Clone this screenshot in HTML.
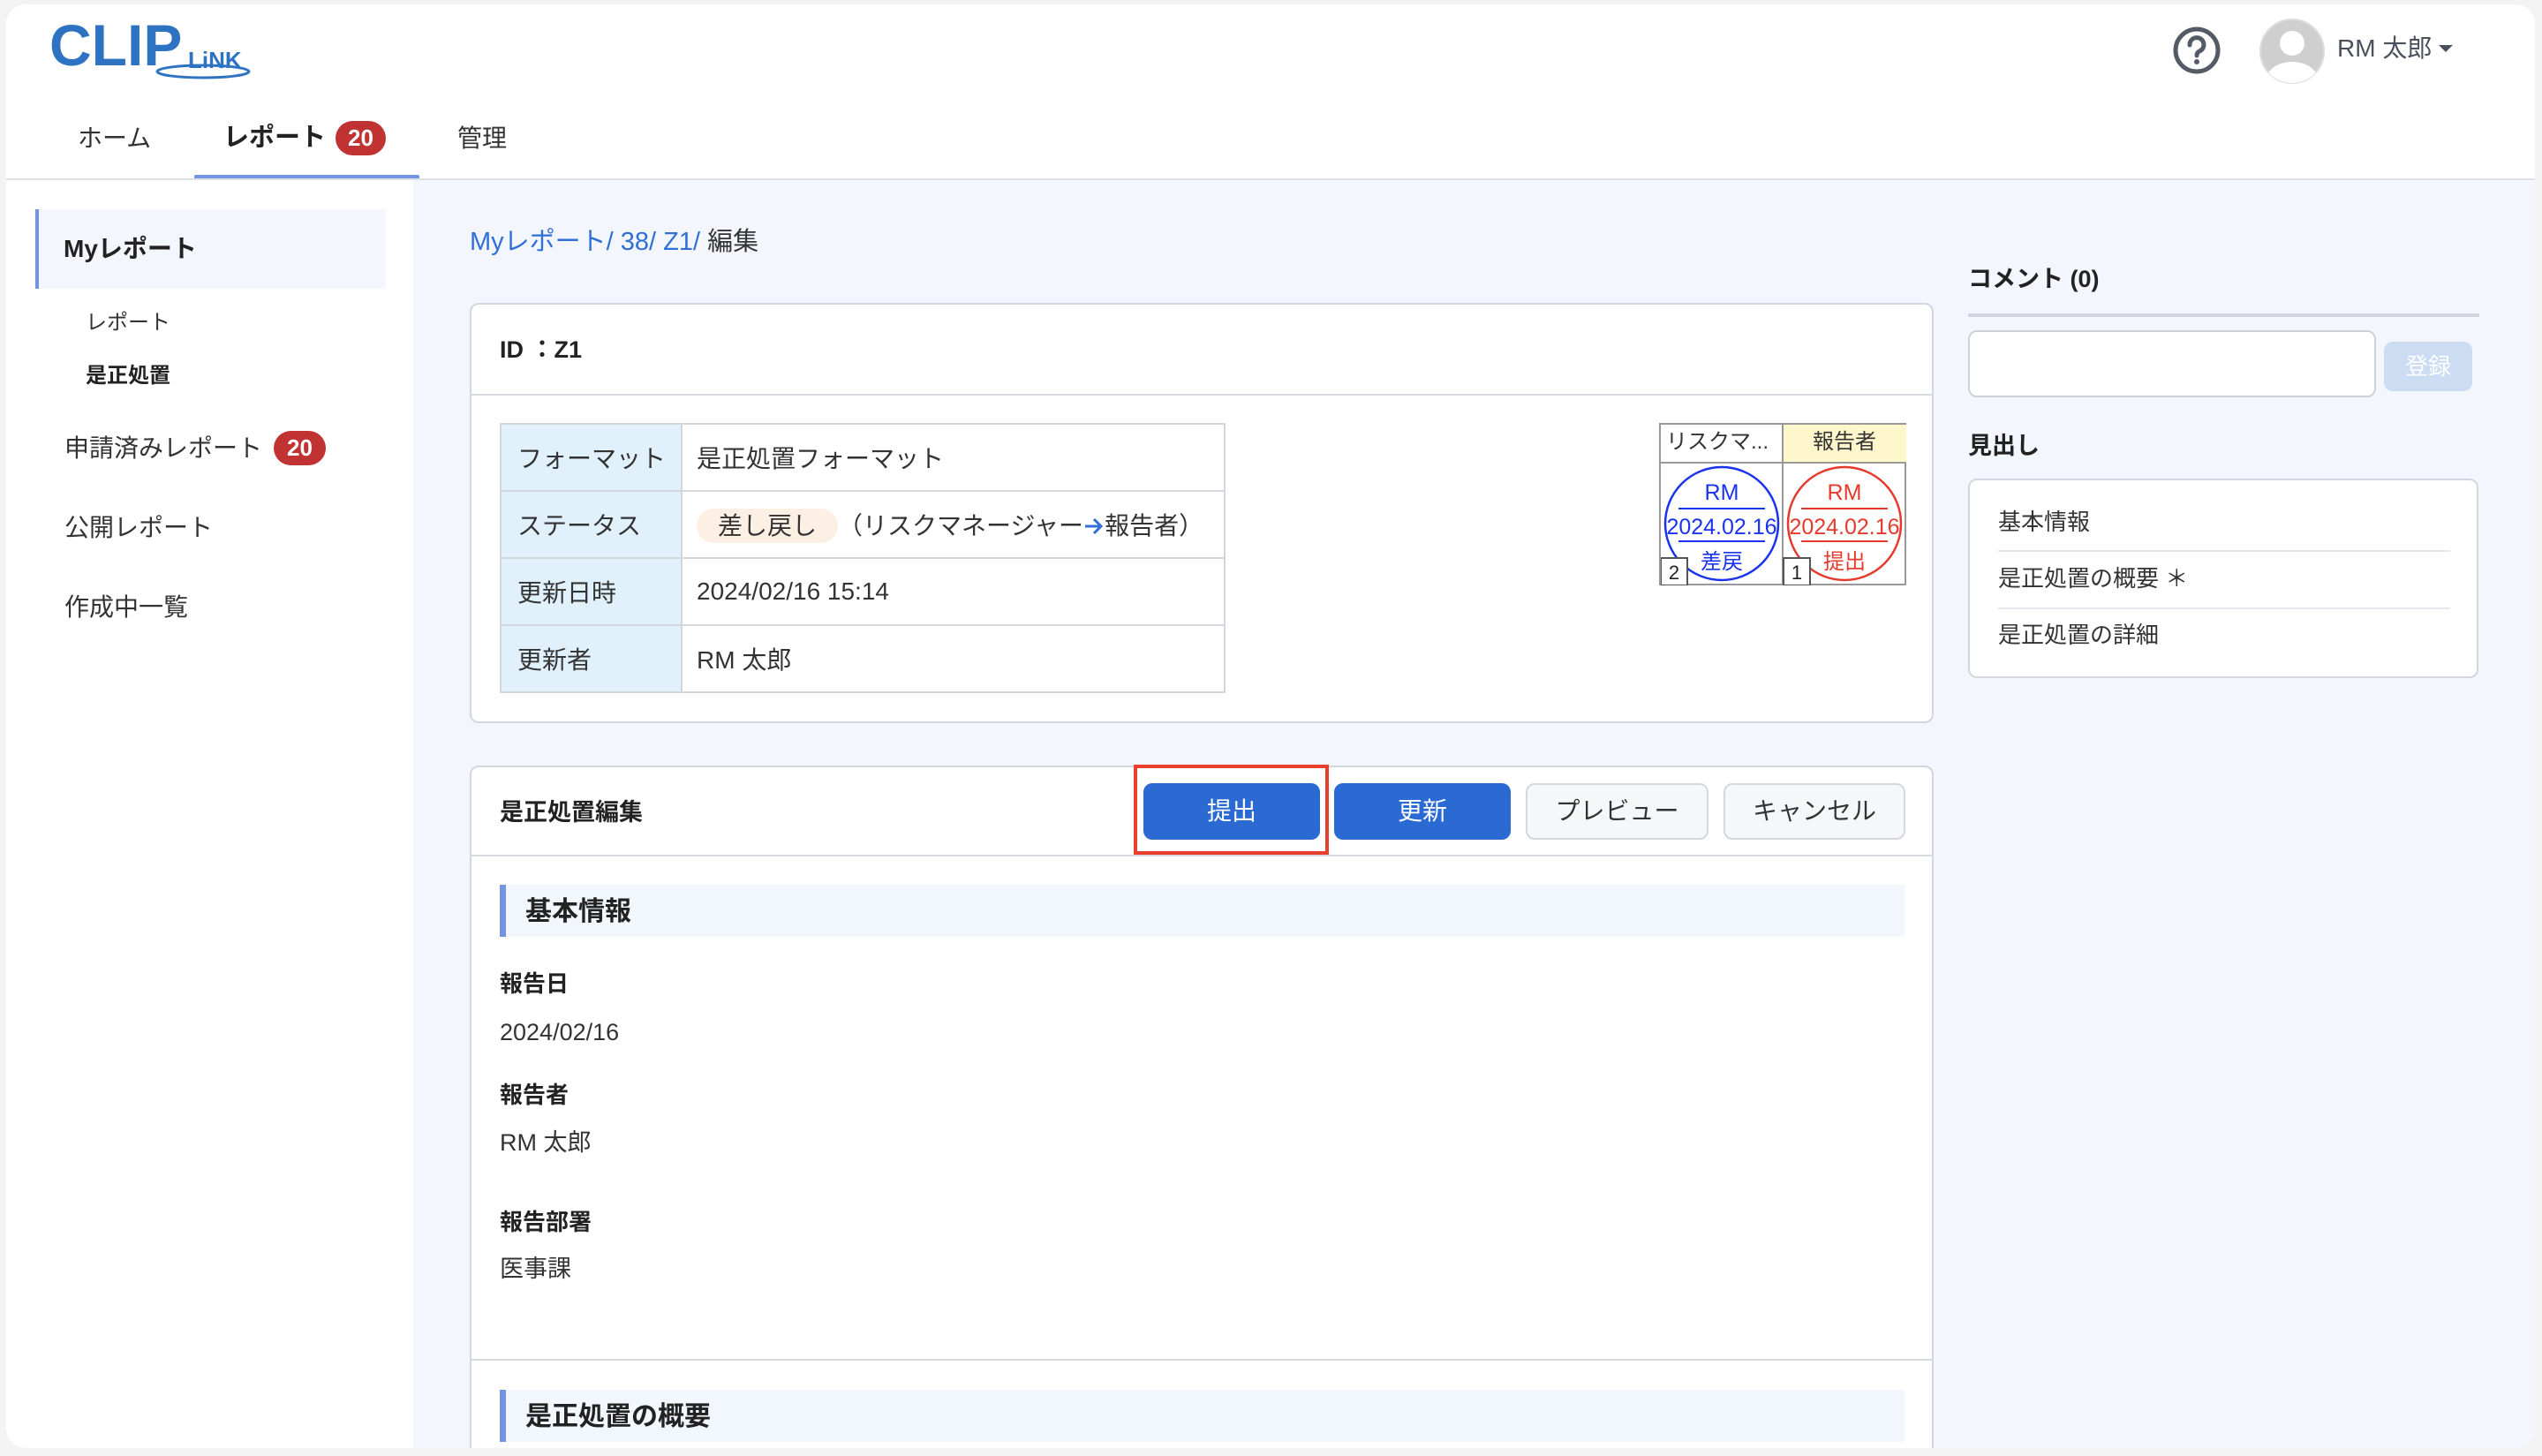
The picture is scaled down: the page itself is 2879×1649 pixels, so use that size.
<!DOCTYPE html>
<html><head><meta charset="utf-8"><style>
*{box-sizing:border-box;margin:0;padding:0}
body{width:2879px;height:1649px;background:#f3f3f3;font-family:"Liberation Sans","Noto Sans CJK JP",sans-serif;color:#222;position:relative;overflow:hidden}
.a{position:absolute}
.card{left:7px;top:5px;width:2864px;height:1635px;background:#fff;border-radius:22px;overflow:hidden}
.t{position:absolute;white-space:nowrap;line-height:1}
.badge{position:absolute;background:#c13333;color:#fff;border-radius:20px;font-weight:bold;font-size:26px;text-align:center}
.box{position:absolute;background:#fff;border:2px solid #d2d7df;border-radius:10px}
table{border-collapse:collapse}
.btn{position:absolute;border-radius:10px;font-size:28px;text-align:center}
</style></head><body>
<div class="a card">
 <!-- header -->
 <div class="t" style="left:49px;top:13px;font-size:66px;font-weight:bold;color:#2e73c1">CLIP</div>
 <div class="t" style="left:206px;top:50px;font-size:26px;font-weight:bold;color:#2e73c1">LiNK</div>
 <svg class="a" style="left:165px;top:62px" width="116" height="26"><ellipse cx="58" cy="14" rx="52" ry="7" fill="none" stroke="#2e73c1" stroke-width="3"/></svg>
 <div class="t" style="left:81px;top:138px;font-size:28px;color:#333">ホーム</div>
 <div class="t" style="left:246px;top:137px;font-size:29px;font-weight:bold;color:#222">レポート</div>
 <div class="badge" style="left:373px;top:132px;width:57px;height:39px;line-height:39px">20</div>
 <div class="t" style="left:511px;top:138px;font-size:28px;color:#333">管理</div>
 <div class="a" style="left:213px;top:193px;width:255px;height:5px;background:#7494df;border-radius:2px"></div>
 <div class="a" style="left:0;top:197px;width:2864px;height:2px;background:#dde1e6"></div>
 <svg class="a" style="left:2452px;top:23px" width="60" height="60"><circle cx="29" cy="29" r="24" fill="none" stroke="#545b66" stroke-width="5"/><path d="M21 23a8 8 0 1 1 11 7c-2 1-3 3-3 5" fill="none" stroke="#545b66" stroke-width="5" stroke-linecap="round"/><circle cx="29" cy="42" r="3" fill="#545b66"/></svg>
 <svg class="a" style="left:2551px;top:15px" width="76" height="76"><defs><clipPath id="c"><circle cx="38" cy="38" r="36"/></clipPath></defs><circle cx="38" cy="38" r="36" fill="#cfcfcf" stroke="#ddd" stroke-width="2"/><g clip-path="url(#c)" fill="#fff"><circle cx="38" cy="29" r="14"/><ellipse cx="38" cy="72" rx="30" ry="22"/></g></svg>
 <div class="t" style="left:2640px;top:36px;font-size:28px;color:#4a515c">RM 太郎</div>
 <svg class="a" style="left:2755px;top:46px" width="16" height="10"><path d="M0 0h16L8 8z" fill="#4a515c"/></svg>

 <!-- content bg -->
 <div class="a" style="left:461px;top:199px;width:2403px;height:1440px;background:#f3f7fd"></div>
 <!-- sidebar -->
 <div class="a" style="left:33px;top:232px;width:397px;height:90px;background:#f3f7fd;border-left:4px solid #7494df"></div>
 <div class="t" style="left:65px;top:263px;font-size:28px;font-weight:bold">Myレポート</div>
 <div class="t" style="left:90px;top:349px;font-size:24px;color:#333">レポート</div>
 <div class="t" style="left:90px;top:409px;font-size:24px;font-weight:bold">是正処置</div>
 <div class="t" style="left:66px;top:489px;font-size:28px;color:#333">申請済みレポート</div>
 <div class="badge" style="left:303px;top:483px;width:59px;height:39px;line-height:39px">20</div>
 <div class="t" style="left:66px;top:579px;font-size:28px;color:#333">公開レポート</div>
 <div class="t" style="left:66px;top:669px;font-size:28px;color:#333">作成中一覧</div>

 <!-- breadcrumb -->
 <div class="t" style="left:525px;top:255px;font-size:29px;color:#2f6fd6">Myレポート/ 38/ Z1/ <span style="color:#333">編集</span></div>

 <!-- card1 -->
 <div class="box" style="left:525px;top:338px;width:1658px;height:476px">
  <div class="t" style="left:32px;top:38px;font-size:27px;font-weight:bold">ID ：Z1</div>
  <div class="a" style="left:0;top:101px;width:1654px;height:2px;background:#d6dbe2"></div>
  <table class="a" style="left:32px;top:134px;width:822px;font-size:28px;color:#333">
   <tr style="height:76px"><td style="width:205px;background:#e1f1fc;border:2px solid #d2d7df;padding-left:18px">フォーマット</td><td style="border:2px solid #d2d7df;padding-left:16px">是正処置フォーマット</td></tr>
   <tr style="height:76px"><td style="background:#e1f1fc;border:2px solid #d2d7df;padding-left:18px">ステータス</td><td style="border:2px solid #d2d7df;padding-left:16px"><span style="background:#fcefe4;border-radius:20px;padding:4px 24px">差し戻し</span>（リスクマネージャー<svg width="24" height="22" style="vertical-align:-2px"><path d="M2 11h18M12 3l8 8-8 8" fill="none" stroke="#2f6fd6" stroke-width="3"/></svg>報告者）</td></tr>
   <tr style="height:76px"><td style="background:#e1f1fc;border:2px solid #d2d7df;padding-left:18px">更新日時</td><td style="border:2px solid #d2d7df;padding-left:16px">2024/02/16 15:14</td></tr>
   <tr style="height:76px"><td style="background:#e1f1fc;border:2px solid #d2d7df;padding-left:18px">更新者</td><td style="border:2px solid #d2d7df;padding-left:16px">RM 太郎</td></tr>
  </table>
  <!-- stamps -->
  <div class="a" style="left:1345px;top:134px;width:280px;height:184px;border:2px solid #999">
   <div class="a" style="left:137px;top:0;width:141px;height:42px;background:#fff7cc"></div>
   <div class="a" style="left:137px;top:0;width:2px;height:182px;background:#999"></div>
   <div class="a" style="left:0;top:42px;width:278px;height:2px;background:#999"></div>
   <div class="t" style="left:6px;top:8px;font-size:24px;color:#333">リスクマ...</div>
   <div class="t" style="left:172px;top:8px;font-size:24px;color:#333">報告者</div>
   <svg class="a" style="left:0;top:44px" width="278" height="138">
    <circle cx="69" cy="68" r="64" fill="none" stroke="#1a33ee" stroke-width="2.5"/>
    <line x1="20" y1="51" x2="118" y2="51" stroke="#1a33ee" stroke-width="2"/>
    <line x1="20" y1="88" x2="118" y2="88" stroke="#1a33ee" stroke-width="2"/>
    <text x="69" y="41" font-size="25" fill="#1a33ee" text-anchor="middle" font-family="Liberation Sans">RM</text>
    <text x="69" y="80" font-size="25" fill="#1a33ee" text-anchor="middle" font-family="Liberation Sans">2024.02.16</text>
    <text x="69" y="119" font-size="24" fill="#1a33ee" text-anchor="middle" font-family="Noto Sans CJK JP">差戻</text>
    <circle cx="208" cy="68" r="64" fill="none" stroke="#e53a2c" stroke-width="2.5"/>
    <line x1="159" y1="51" x2="257" y2="51" stroke="#e53a2c" stroke-width="2"/>
    <line x1="159" y1="88" x2="257" y2="88" stroke="#e53a2c" stroke-width="2"/>
    <text x="208" y="41" font-size="25" fill="#e53a2c" text-anchor="middle" font-family="Liberation Sans">RM</text>
    <text x="208" y="80" font-size="25" fill="#e53a2c" text-anchor="middle" font-family="Liberation Sans">2024.02.16</text>
    <text x="208" y="119" font-size="24" fill="#e53a2c" text-anchor="middle" font-family="Noto Sans CJK JP">提出</text>
    <rect x="0" y="107" width="30" height="31" fill="#fff" stroke="#555" stroke-width="2"/>
    <text x="15" y="131" font-size="22" fill="#222" text-anchor="middle" font-family="Liberation Sans">2</text>
    <rect x="139" y="107" width="30" height="31" fill="#fff" stroke="#555" stroke-width="2"/>
    <text x="154" y="131" font-size="22" fill="#222" text-anchor="middle" font-family="Liberation Sans">1</text>
   </svg>
  </div>
 </div>

 <!-- card2 -->
 <div class="box" style="left:525px;top:862px;width:1658px;height:800px">
  <div class="t" style="left:32px;top:38px;font-size:27px;font-weight:bold">是正処置編集</div>
  <div class="a" style="left:0;top:99px;width:1654px;height:2px;background:#d6dbe2"></div>
  <div class="btn" style="left:761px;top:18px;width:200px;height:64px;line-height:64px;background:#2b69d3;color:#fff">提出</div>
  <div class="btn" style="left:977px;top:18px;width:200px;height:64px;line-height:64px;background:#2b69d3;color:#fff">更新</div>
  <div class="btn" style="left:1194px;top:18px;width:207px;height:64px;line-height:60px;background:#f6f7f9;border:2px solid #d4d7dc;color:#333">プレビュー</div>
  <div class="btn" style="left:1418px;top:18px;width:206px;height:64px;line-height:60px;background:#f6f7f9;border:2px solid #d4d7dc;color:#333">キャンセル</div>
  <div class="a" style="left:32px;top:133px;width:1591px;height:59px;background:#f2f6fd;border-left:7px solid #7494df"></div>
  <div class="t" style="left:61px;top:149px;font-size:30px;font-weight:bold">基本情報</div>
  <div class="t" style="left:32px;top:232px;font-size:26px;font-weight:bold">報告日</div>
  <div class="t" style="left:32px;top:287px;font-size:27px;color:#333">2024/02/16</div>
  <div class="t" style="left:32px;top:358px;font-size:26px;font-weight:bold">報告者</div>
  <div class="t" style="left:32px;top:412px;font-size:27px;color:#333">RM 太郎</div>
  <div class="t" style="left:32px;top:502px;font-size:26px;font-weight:bold">報告部署</div>
  <div class="t" style="left:32px;top:555px;font-size:27px;color:#333">医事課</div>
  <div class="a" style="left:0;top:670px;width:1654px;height:2px;background:#d6dbe2"></div>
  <div class="a" style="left:32px;top:705px;width:1591px;height:59px;background:#f2f6fd;border-left:7px solid #7494df"></div>
  <div class="t" style="left:61px;top:721px;font-size:30px;font-weight:bold">是正処置の概要</div>
 </div>
 <div class="a" style="left:1277px;top:861px;width:221px;height:102px;border:4px solid #e8402c"></div>

 <!-- right panel -->
 <div class="t" style="left:2222px;top:298px;font-size:27px;font-weight:bold">コメント (0)</div>
 <div class="a" style="left:2222px;top:350px;width:579px;height:4px;background:#d0d5dd"></div>
 <div class="a" style="left:2222px;top:369px;width:462px;height:76px;background:#fff;border:2px solid #cdd2d9;border-radius:10px"></div>
 <div class="btn" style="left:2693px;top:382px;width:100px;height:56px;line-height:56px;background:#cbdcf3;color:#fff;font-size:26px">登録</div>
 <div class="t" style="left:2222px;top:487px;font-size:27px;font-weight:bold">見出し</div>
 <div class="box" style="left:2222px;top:537px;width:578px;height:226px">
  <div class="t" style="left:32px;top:34px;font-size:26px;color:#333">基本情報</div>
  <div class="a" style="left:32px;top:79px;width:512px;height:2px;background:#e3e7ec"></div>
  <div class="t" style="left:32px;top:98px;font-size:26px;color:#333">是正処置の概要 ＊</div>
  <div class="a" style="left:32px;top:144px;width:512px;height:2px;background:#e3e7ec"></div>
  <div class="t" style="left:32px;top:162px;font-size:26px;color:#333">是正処置の詳細</div>
 </div>
</div>
</body></html>
